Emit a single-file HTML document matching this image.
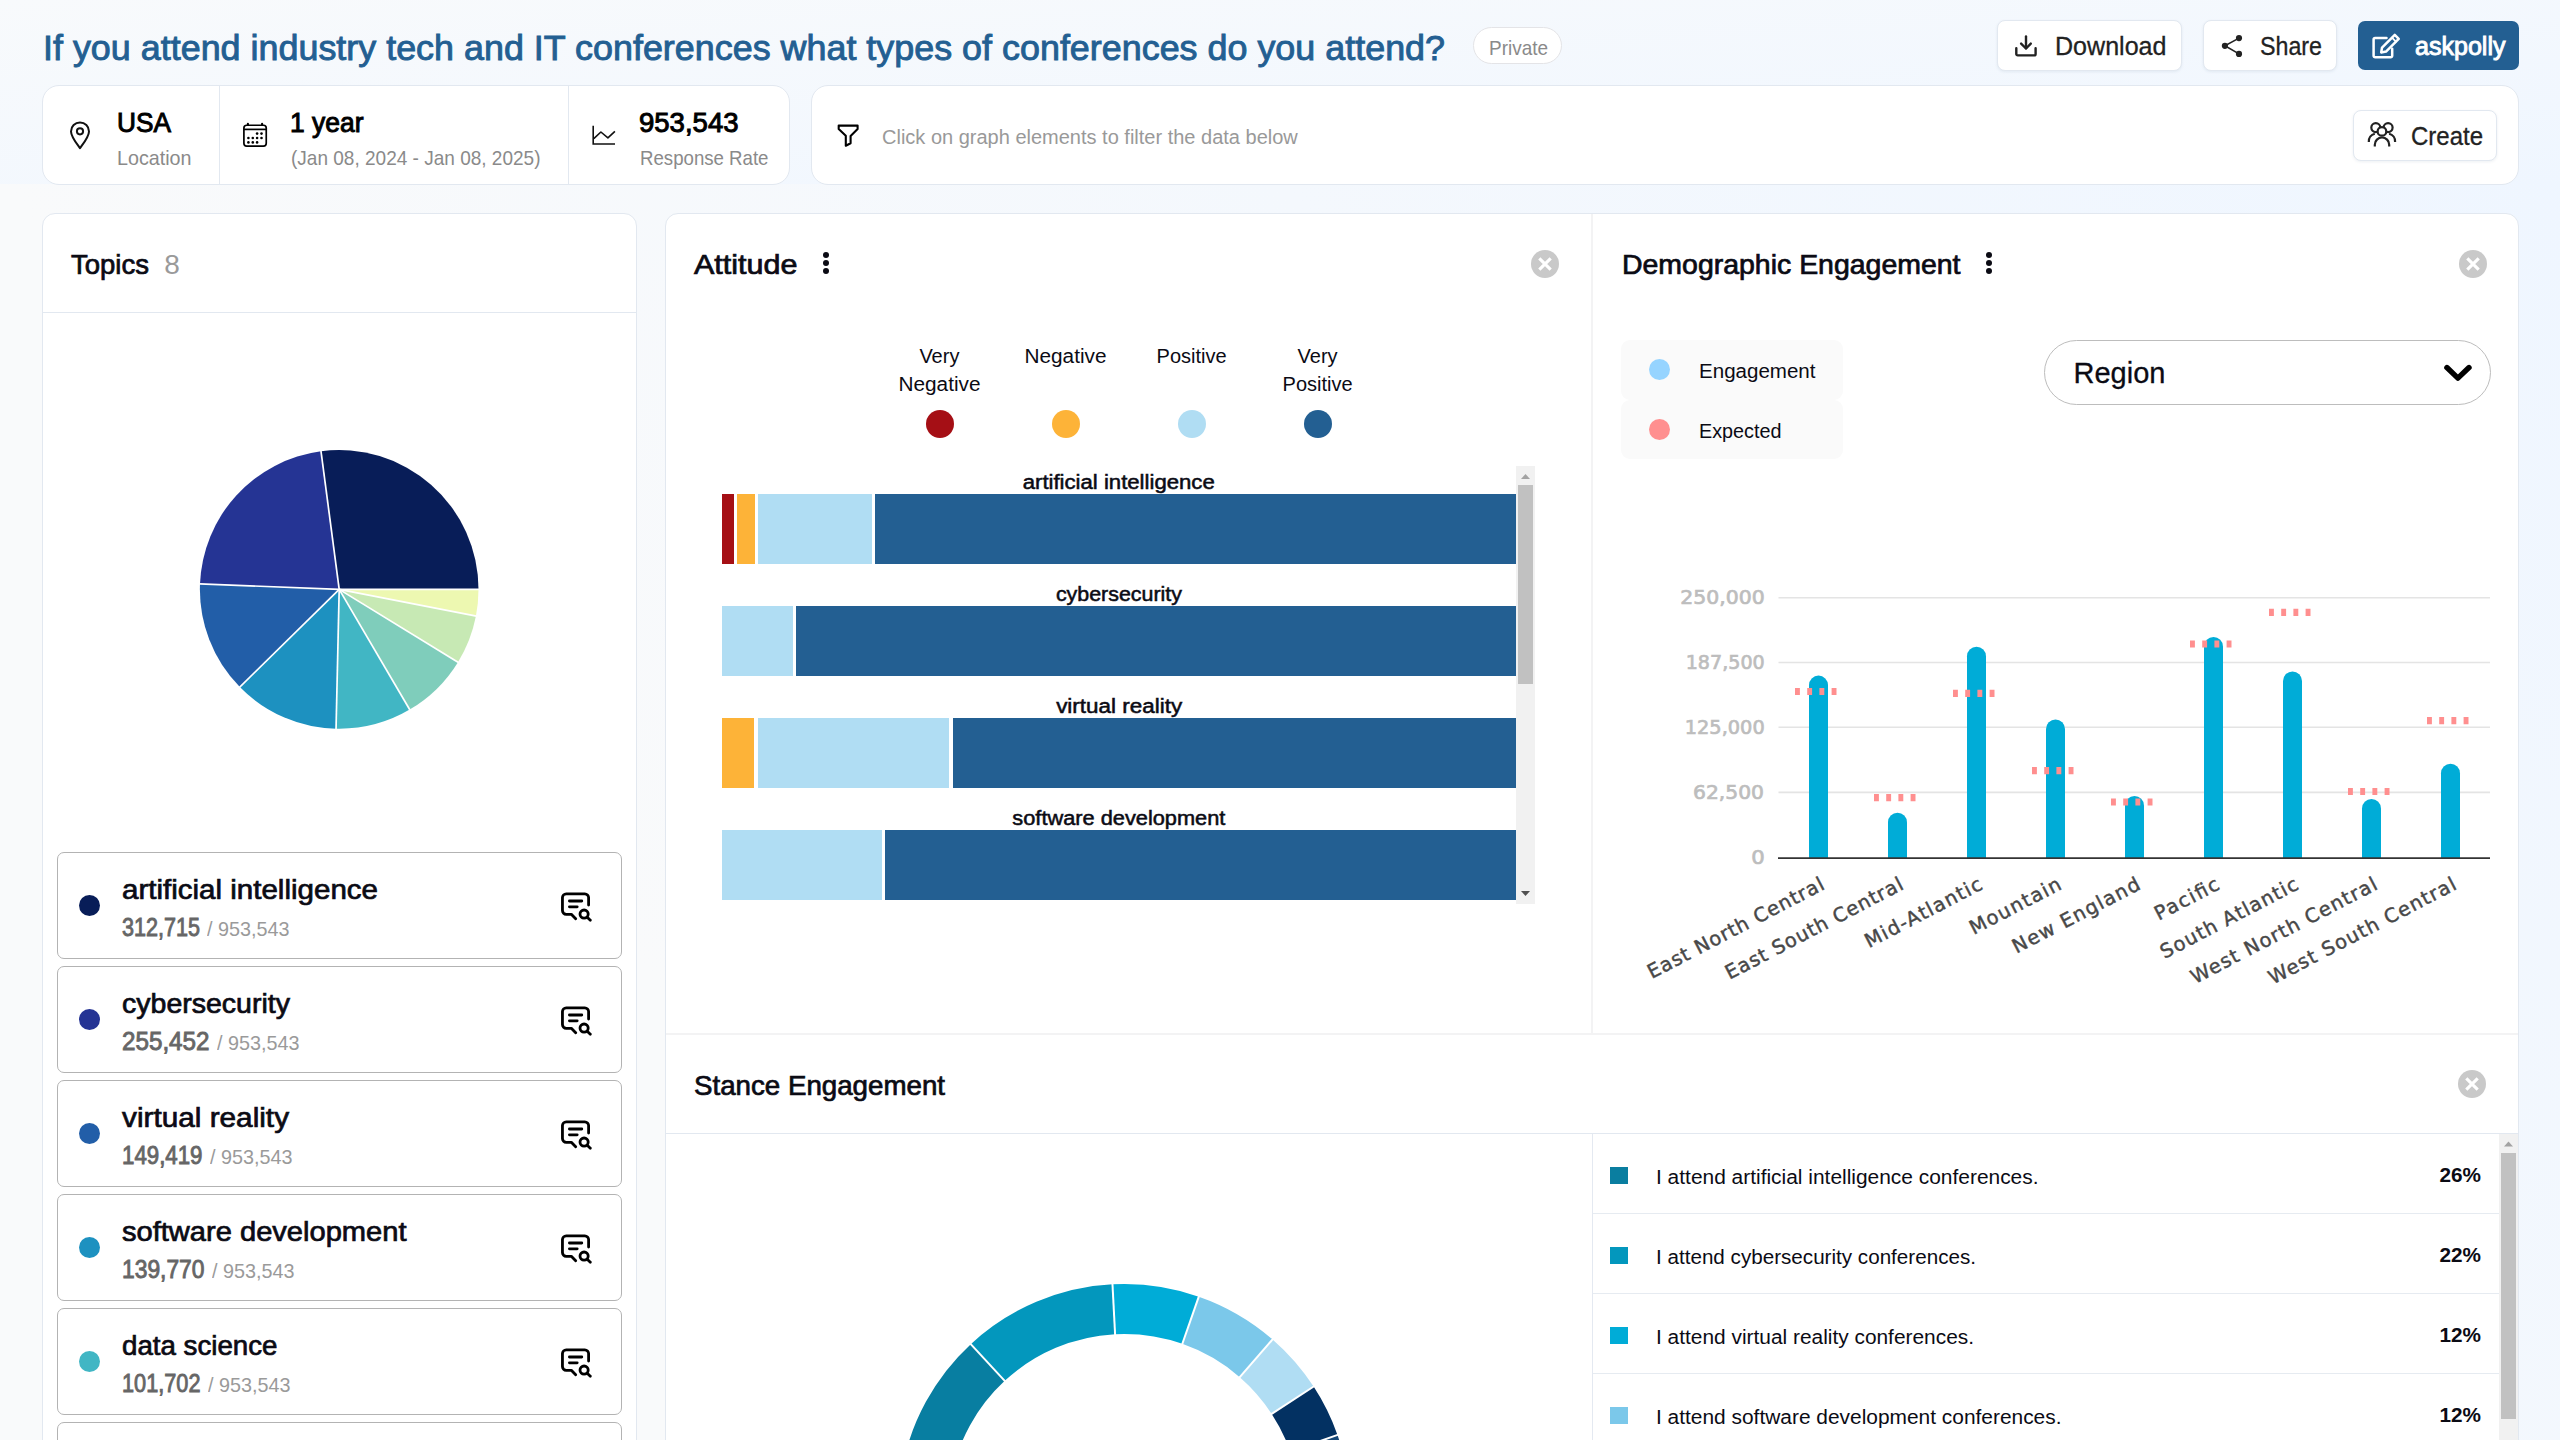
<!DOCTYPE html><html lang="en"><head><meta charset="utf-8"><title>askpolly – conference types dashboard</title><style>
*{box-sizing:border-box;margin:0;padding:0}
html,body{width:2560px;height:1440px;overflow:hidden}
body{font-family:"Liberation Sans",Arial,sans-serif;color:#000;background:#f4f8fc}
#app{position:relative;width:2560px;height:1440px;overflow:hidden;
 background:#f9fafb}
#bg1{position:absolute;left:0;top:0;width:2560px;height:184px;background:linear-gradient(to bottom right,#f8fafc,#eff6ff)}
#bg2{position:absolute;left:0;top:184px;width:2560px;height:3140px;background:linear-gradient(to top right,#f9fafb 0%,#f9fafb 50%,#eff6ff 100%)}
.abs{position:absolute}
.card{position:absolute;background:#fff;border:1px solid #e2e8f0}
.btn{position:absolute;background:#fff;border:1px solid #e2e8f0;border-radius:8px;box-shadow:0 1px 3px rgba(30,60,100,.08)}
svg{position:absolute;overflow:visible}
</style></head><body><div id="app"><div id="bg1"></div><div id="bg2"></div>
<header>
<span style="position:absolute;left:42.50px;top:30.00px;font-family:'Liberation Sans', Arial, sans-serif;font-size:35px;line-height:35px;font-weight:400;color:#235f92;white-space:pre;transform:scaleX(1.0255);transform-origin:0 0;-webkit-text-stroke:0.91px #235f92;">If you attend industry tech and IT conferences what types of conferences do you attend?</span>
<div class="abs" style="left:1473px;top:27px;width:89px;height:37px;border:1px solid #e4e4e7;border-radius:19px;background:#fff"></div>
<span style="position:absolute;left:1488.50px;top:37.00px;font-family:'Liberation Sans', Arial, sans-serif;font-size:21px;line-height:21px;font-weight:400;color:#8a8a8a;white-space:pre;transform:scaleX(0.9027);transform-origin:0 0;">Private</span>
<div class="btn" style="left:1997px;top:20px;width:185px;height:51px"></div>
<svg style="left:2014px;top:34px" width="24" height="24" viewBox="0 0 24 24" fill="none" stroke="#222" stroke-width="2.400" stroke-linecap="round" stroke-linejoin="round"><path d="M2.300 14.300V20a1.400 1.400 0 0 0 1.400 1.400H20.200a1.400 1.400 0 0 0 1.400-1.400V14.300"/><path d="M12 2.400V14.200"/><path d="M7.100 9.600 12 14.500l4.800-4.900"/></svg>
<span style="position:absolute;left:2054.50px;top:33.00px;font-family:'Liberation Sans', Arial, sans-serif;font-size:26px;line-height:26px;font-weight:400;color:#222;white-space:pre;transform:scaleX(0.9642);transform-origin:0 0;-webkit-text-stroke:0.300px #222;">Download</span>
<div class="btn" style="left:2203px;top:20px;width:133.5px;height:51px"></div>
<svg style="left:0;top:0" width="2560" height="100" viewBox="0 0 2560 100"><path d="M2239 38.100 2224.900 45.800 2239 53.900" stroke="#222" stroke-width="1.600" fill="none"/><circle cx="2239" cy="38.100" r="3.100" fill="#222"/><circle cx="2224.900" cy="45.800" r="3.100" fill="#222"/><circle cx="2239" cy="53.900" r="3.100" fill="#222"/></svg>
<span style="position:absolute;left:2260.00px;top:33.00px;font-family:'Liberation Sans', Arial, sans-serif;font-size:26px;line-height:26px;font-weight:400;color:#222;white-space:pre;transform:scaleX(0.8935);transform-origin:0 0;-webkit-text-stroke:0.300px #222;">Share</span>
<div class="abs" style="left:2358px;top:21px;width:161px;height:49px;background:#235f92;border-radius:7px"></div>
<svg style="left:0;top:0" width="2560" height="100" viewBox="0 0 2560 100" fill="none" stroke="#fff" stroke-width="2.500" stroke-linecap="round" stroke-linejoin="round"><path d="M2386.500 37.900H2375.100a1.500 1.500 0 0 0-1.500 1.500V55.700a1.500 1.500 0 0 0 1.500 1.500H2390.700a1.500 1.500 0 0 0 1.500-1.500V48.800"/><path d="M2381.200 52.400 2382.050 47.590 2394.780 34.860 2398.740 38.820 2386.010 51.550Z"/><path d="M2391.950 37.690 2395.910 41.650" stroke-width="1.800"/></svg>
<span style="position:absolute;left:2415.00px;top:33.00px;font-family:'Liberation Sans', Arial, sans-serif;font-size:26px;line-height:26px;font-weight:400;color:#fff;white-space:pre;transform:scaleX(0.9634);transform-origin:0 0;-webkit-text-stroke:0.94px #fff;">askpolly</span>
</header>
<section>
<div class="card" style="left:42px;top:85px;width:748px;height:100px;border-radius:17px"></div>
<div class="abs" style="left:219px;top:86px;width:1px;height:98px;background:#e2e8f0"></div>
<div class="abs" style="left:568px;top:86px;width:1px;height:98px;background:#e2e8f0"></div>
<svg style="left:68.700px;top:120.700px" width="22" height="29" viewBox="0 0 22 29" fill="none" stroke="#111" stroke-width="2"><path d="M11 27.2C8.2 23.2 2 15.6 2 10.4a9 9 0 0 1 18 0c0 5.200-6.200 12.800-9 16.800z" stroke-linejoin="round"/><circle cx="11" cy="10.300" r="3.100"/></svg>
<span style="position:absolute;left:116.50px;top:110.00px;font-family:'Liberation Sans', Arial, sans-serif;font-size:27px;line-height:27px;font-weight:400;color:#000;white-space:pre;transform:scaleX(0.9724);transform-origin:0 0;-webkit-text-stroke:0.97px #000;">USA</span>
<span style="position:absolute;left:116.50px;top:147.00px;font-family:'Liberation Sans', Arial, sans-serif;font-size:21px;line-height:21px;font-weight:400;color:#8a8a8a;white-space:pre;transform:scaleX(0.9382);transform-origin:0 0;">Location</span>
<svg style="left:0;top:0" width="400" height="200" viewBox="0 0 400 200" fill="none" stroke="#000" stroke-width="1.700"><rect x="243.900" y="125.250" width="22.350" height="20.800" rx="2.800"/><path d="M243.900 129.400H266.250"/><path d="M247.900 123.800V125M262.100 123.800V125" stroke-width="2.100" stroke-linecap="round"/><g fill="#000" stroke="none"><circle cx="257.1" cy="133.6" r="1.300"/><circle cx="261.5" cy="133.6" r="1.300"/><circle cx="248.4" cy="138.0" r="1.300"/><circle cx="252.8" cy="138.0" r="1.300"/><circle cx="257.1" cy="138.0" r="1.300"/><circle cx="261.5" cy="138.0" r="1.300"/><circle cx="248.4" cy="142.4" r="1.300"/><circle cx="252.8" cy="142.4" r="1.300"/><circle cx="257.1" cy="142.4" r="1.300"/></g></svg>
<span style="position:absolute;left:289.50px;top:110.00px;font-family:'Liberation Sans', Arial, sans-serif;font-size:27px;line-height:27px;font-weight:400;color:#000;white-space:pre;transform:scaleX(0.9794);transform-origin:0 0;-webkit-text-stroke:0.97px #000;">1 year</span>
<span style="position:absolute;left:290.50px;top:147.00px;font-family:'Liberation Sans', Arial, sans-serif;font-size:21px;line-height:21px;font-weight:400;color:#8a8a8a;white-space:pre;transform:scaleX(0.9055);transform-origin:0 0;">(Jan 08, 2024 - Jan 08, 2025)</span>
<svg style="left:592px;top:125px" width="24" height="21" viewBox="0 0 24 21" fill="none" stroke="#111" stroke-width="1.600"><path d="M1.200 .800V19H23"/><path d="M1.800 13.700 8.900 7l7 5.900 7-6.600" stroke-linejoin="round"/></svg>
<span style="position:absolute;left:639.00px;top:110.00px;font-family:'Liberation Sans', Arial, sans-serif;font-size:27px;line-height:27px;font-weight:400;color:#000;white-space:pre;transform:scaleX(1.0194);transform-origin:0 0;-webkit-text-stroke:0.97px #000;">953,543</span>
<span style="position:absolute;left:639.50px;top:147.00px;font-family:'Liberation Sans', Arial, sans-serif;font-size:21px;line-height:21px;font-weight:400;color:#8a8a8a;white-space:pre;transform:scaleX(0.8876);transform-origin:0 0;">Response Rate</span>
<div class="card" style="left:811px;top:85px;width:1708px;height:100px;border-radius:17px"></div>
<svg style="left:828px;top:116px" width="40" height="40" viewBox="0 0 40 40" fill="none" stroke="#000" stroke-width="2.100" stroke-linejoin="round"><path d="M10.700 9.600H29.600V13L22.600 20V27.200L17.800 29.700V19.700L10.700 13Z"/></svg>
<span style="position:absolute;left:882.00px;top:127.00px;font-family:'Liberation Sans', Arial, sans-serif;font-size:20px;line-height:20px;font-weight:400;color:#999;white-space:pre;">Click on graph elements to filter the data below</span>
<div class="btn" style="left:2353px;top:110px;width:144px;height:50.5px"></div>
<svg style="left:0;top:0" width="2560" height="200" viewBox="0 0 2560 200" fill="none" stroke="#222" stroke-width="2.200" stroke-linecap="butt"><circle cx="2375.800" cy="127.600" r="4.500"/><circle cx="2388.100" cy="127.600" r="4.500"/><circle cx="2381.950" cy="131.400" r="4.300" fill="#fff"/><path d="M2374.800 146.500v-1.800a7.200 7.200 0 0 1 14.400 0v1.800"/><path d="M2368.800 142a8 8 0 0 1 6-8.300"/><path d="M2395.100 142a8 8 0 0 0-6-8.300"/></svg>
<span style="position:absolute;left:2410.50px;top:123.00px;font-family:'Liberation Sans', Arial, sans-serif;font-size:26px;line-height:26px;font-weight:400;color:#222;white-space:pre;transform:scaleX(0.9225);transform-origin:0 0;-webkit-text-stroke:0.300px #222;">Create</span>
</section>
<aside>
<div class="card" style="left:42px;top:213px;width:595px;height:1300px;border-radius:13px"></div>
<div class="abs" style="left:43px;top:311.500px;width:593px;height:1px;background:#e2e8f0"></div>
<span style="position:absolute;left:71.00px;top:251.00px;font-family:'Liberation Sans', Arial, sans-serif;font-size:28px;line-height:28px;font-weight:400;color:#0b0b14;white-space:pre;transform:scaleX(0.9827);transform-origin:0 0;-webkit-text-stroke:0.73px #0b0b14;">Topics</span>
<span style="position:absolute;left:164.30px;top:251.00px;font-family:'Liberation Sans', Arial, sans-serif;font-size:28px;line-height:28px;font-weight:400;color:#9a9a9a;white-space:pre;">8</span>
<svg style="left:0;top:0" width="700" height="800" viewBox="0 0 700 800"><path d="M339.2 589.4L478.50 589.40A139.3 139.3 0 0 0 321.02 451.29Z" fill="#081d58"/><path d="M339.2 589.4L321.02 451.29A139.3 139.3 0 0 0 200.01 583.81Z" fill="#253494"/><path d="M339.2 589.4L200.01 583.81A139.3 139.3 0 0 0 239.84 687.04Z" fill="#225ea8"/><path d="M339.2 589.4L239.84 687.04A139.3 139.3 0 0 0 336.04 728.66Z" fill="#1d91c0"/><path d="M339.2 589.4L336.04 728.66A139.3 139.3 0 0 0 409.69 709.55Z" fill="#41b6c4"/><path d="M339.2 589.4L409.69 709.55A139.3 139.3 0 0 0 457.97 662.18Z" fill="#7fcdbb"/><path d="M339.2 589.4L457.97 662.18A139.3 139.3 0 0 0 475.94 615.98Z" fill="#c7e9b4"/><path d="M339.2 589.4L475.94 615.98A139.3 139.3 0 0 0 478.50 589.40Z" fill="#edf8b1"/><path d="M339.2 589.4L479.00 589.40" stroke="#fff" stroke-width="1.700" stroke-linecap="butt"/><path d="M339.2 589.4L320.95 450.80" stroke="#fff" stroke-width="1.700" stroke-linecap="butt"/><path d="M339.2 589.4L199.51 583.79" stroke="#fff" stroke-width="1.700" stroke-linecap="butt"/><path d="M339.2 589.4L239.49 687.39" stroke="#fff" stroke-width="1.700" stroke-linecap="butt"/><path d="M339.2 589.4L336.03 729.16" stroke="#fff" stroke-width="1.700" stroke-linecap="butt"/><path d="M339.2 589.4L409.94 709.98" stroke="#fff" stroke-width="1.700" stroke-linecap="butt"/><path d="M339.2 589.4L458.40 662.45" stroke="#fff" stroke-width="1.700" stroke-linecap="butt"/><path d="M339.2 589.4L476.43 616.08" stroke="#fff" stroke-width="1.700" stroke-linecap="butt"/></svg>
<div class="abs" style="left:57px;top:852px;width:565px;height:107px;border:1px solid #b3b3b3;border-radius:7px;background:#fff"></div>
<div class="abs" style="left:79px;top:894.5px;width:21px;height:21px;border-radius:50%;background:#081d58"></div>
<span style="position:absolute;left:121.50px;top:877.00px;font-family:'Liberation Sans', Arial, sans-serif;font-size:27px;line-height:27px;font-weight:400;color:#0b0b14;white-space:pre;transform:scaleX(1.0934);transform-origin:0 0;-webkit-text-stroke:0.70px #0b0b14;">artificial intelligence</span>
<span style="position:absolute;left:121.80px;top:915.00px;font-family:'Liberation Sans', Arial, sans-serif;font-size:25px;line-height:25px;font-weight:400;color:#666;white-space:pre;transform:scaleX(0.8631);transform-origin:0 0;-webkit-text-stroke:0.90px #666;">312,715</span>
<span style="position:absolute;left:207.10px;top:918.00px;font-family:'Liberation Sans', Arial, sans-serif;font-size:21px;line-height:21px;font-weight:400;color:#9a9a9a;white-space:pre;transform:scaleX(0.9418);transform-origin:0 0;">/ 953,543</span>
<svg style="left:0;top:0px" width="700" height="1000" viewBox="0 0 700 1000" fill="none" stroke="#000" stroke-width="2.800" stroke-linecap="round" stroke-linejoin="round"><path d="M588.600 905V897.600a3.800 3.800 0 0 0-3.800-3.800H566.250a3.800 3.800 0 0 0-3.800 3.800v12.900a3.800 3.800 0 0 0 3.800 3.800h5.050l4.400 4.500"/><path d="M569.400 901h12.400M569.400 906.800h7.800"/><circle cx="584.100" cy="914.100" r="4.100"/><path d="M587.500 917.500l2.800 2.800"/></svg>
<div class="abs" style="left:57px;top:966px;width:565px;height:107px;border:1px solid #b3b3b3;border-radius:7px;background:#fff"></div>
<div class="abs" style="left:79px;top:1008.5px;width:21px;height:21px;border-radius:50%;background:#253494"></div>
<span style="position:absolute;left:121.50px;top:991.00px;font-family:'Liberation Sans', Arial, sans-serif;font-size:27px;line-height:27px;font-weight:400;color:#0b0b14;white-space:pre;transform:scaleX(1.0563);transform-origin:0 0;-webkit-text-stroke:0.70px #0b0b14;">cybersecurity</span>
<span style="position:absolute;left:121.80px;top:1029.00px;font-family:'Liberation Sans', Arial, sans-serif;font-size:25px;line-height:25px;font-weight:400;color:#666;white-space:pre;transform:scaleX(0.9682);transform-origin:0 0;-webkit-text-stroke:0.90px #666;">255,452</span>
<span style="position:absolute;left:216.60px;top:1032.00px;font-family:'Liberation Sans', Arial, sans-serif;font-size:21px;line-height:21px;font-weight:400;color:#9a9a9a;white-space:pre;transform:scaleX(0.9418);transform-origin:0 0;">/ 953,543</span>
<svg style="left:0;top:114px" width="700" height="1000" viewBox="0 0 700 1000" fill="none" stroke="#000" stroke-width="2.800" stroke-linecap="round" stroke-linejoin="round"><path d="M588.600 905V897.600a3.800 3.800 0 0 0-3.800-3.800H566.250a3.800 3.800 0 0 0-3.800 3.800v12.900a3.800 3.800 0 0 0 3.800 3.800h5.050l4.400 4.500"/><path d="M569.400 901h12.400M569.400 906.800h7.800"/><circle cx="584.100" cy="914.100" r="4.100"/><path d="M587.500 917.500l2.800 2.800"/></svg>
<div class="abs" style="left:57px;top:1080px;width:565px;height:107px;border:1px solid #b3b3b3;border-radius:7px;background:#fff"></div>
<div class="abs" style="left:79px;top:1122.5px;width:21px;height:21px;border-radius:50%;background:#225ea8"></div>
<span style="position:absolute;left:121.50px;top:1105.00px;font-family:'Liberation Sans', Arial, sans-serif;font-size:27px;line-height:27px;font-weight:400;color:#0b0b14;white-space:pre;transform:scaleX(1.1020);transform-origin:0 0;-webkit-text-stroke:0.70px #0b0b14;">virtual reality</span>
<span style="position:absolute;left:121.80px;top:1143.00px;font-family:'Liberation Sans', Arial, sans-serif;font-size:25px;line-height:25px;font-weight:400;color:#666;white-space:pre;transform:scaleX(0.8907);transform-origin:0 0;-webkit-text-stroke:0.90px #666;">149,419</span>
<span style="position:absolute;left:209.60px;top:1146.00px;font-family:'Liberation Sans', Arial, sans-serif;font-size:21px;line-height:21px;font-weight:400;color:#9a9a9a;white-space:pre;transform:scaleX(0.9418);transform-origin:0 0;">/ 953,543</span>
<svg style="left:0;top:228px" width="700" height="1000" viewBox="0 0 700 1000" fill="none" stroke="#000" stroke-width="2.800" stroke-linecap="round" stroke-linejoin="round"><path d="M588.600 905V897.600a3.800 3.800 0 0 0-3.800-3.800H566.250a3.800 3.800 0 0 0-3.800 3.800v12.900a3.800 3.800 0 0 0 3.800 3.800h5.050l4.400 4.500"/><path d="M569.400 901h12.400M569.400 906.800h7.800"/><circle cx="584.100" cy="914.100" r="4.100"/><path d="M587.500 917.500l2.800 2.800"/></svg>
<div class="abs" style="left:57px;top:1194px;width:565px;height:107px;border:1px solid #b3b3b3;border-radius:7px;background:#fff"></div>
<div class="abs" style="left:79px;top:1236.5px;width:21px;height:21px;border-radius:50%;background:#1d91c0"></div>
<span style="position:absolute;left:121.50px;top:1219.00px;font-family:'Liberation Sans', Arial, sans-serif;font-size:27px;line-height:27px;font-weight:400;color:#0b0b14;white-space:pre;transform:scaleX(1.0770);transform-origin:0 0;-webkit-text-stroke:0.70px #0b0b14;">software development</span>
<span style="position:absolute;left:121.80px;top:1257.00px;font-family:'Liberation Sans', Arial, sans-serif;font-size:25px;line-height:25px;font-weight:400;color:#666;white-space:pre;transform:scaleX(0.9129);transform-origin:0 0;-webkit-text-stroke:0.90px #666;">139,770</span>
<span style="position:absolute;left:211.60px;top:1260.00px;font-family:'Liberation Sans', Arial, sans-serif;font-size:21px;line-height:21px;font-weight:400;color:#9a9a9a;white-space:pre;transform:scaleX(0.9418);transform-origin:0 0;">/ 953,543</span>
<svg style="left:0;top:342px" width="700" height="1000" viewBox="0 0 700 1000" fill="none" stroke="#000" stroke-width="2.800" stroke-linecap="round" stroke-linejoin="round"><path d="M588.600 905V897.600a3.800 3.800 0 0 0-3.800-3.800H566.250a3.800 3.800 0 0 0-3.800 3.800v12.900a3.800 3.800 0 0 0 3.800 3.800h5.050l4.400 4.500"/><path d="M569.400 901h12.400M569.400 906.800h7.800"/><circle cx="584.100" cy="914.100" r="4.100"/><path d="M587.500 917.500l2.800 2.800"/></svg>
<div class="abs" style="left:57px;top:1308px;width:565px;height:107px;border:1px solid #b3b3b3;border-radius:7px;background:#fff"></div>
<div class="abs" style="left:79px;top:1350.5px;width:21px;height:21px;border-radius:50%;background:#41b6c4"></div>
<span style="position:absolute;left:121.50px;top:1333.00px;font-family:'Liberation Sans', Arial, sans-serif;font-size:27px;line-height:27px;font-weight:400;color:#0b0b14;white-space:pre;transform:scaleX(1.0257);transform-origin:0 0;-webkit-text-stroke:0.70px #0b0b14;">data science</span>
<span style="position:absolute;left:121.80px;top:1371.00px;font-family:'Liberation Sans', Arial, sans-serif;font-size:25px;line-height:25px;font-weight:400;color:#666;white-space:pre;transform:scaleX(0.8686);transform-origin:0 0;-webkit-text-stroke:0.90px #666;">101,702</span>
<span style="position:absolute;left:207.60px;top:1374.00px;font-family:'Liberation Sans', Arial, sans-serif;font-size:21px;line-height:21px;font-weight:400;color:#9a9a9a;white-space:pre;transform:scaleX(0.9418);transform-origin:0 0;">/ 953,543</span>
<svg style="left:0;top:456px" width="700" height="1000" viewBox="0 0 700 1000" fill="none" stroke="#000" stroke-width="2.800" stroke-linecap="round" stroke-linejoin="round"><path d="M588.600 905V897.600a3.800 3.800 0 0 0-3.800-3.800H566.250a3.800 3.800 0 0 0-3.800 3.800v12.900a3.800 3.800 0 0 0 3.800 3.800h5.050l4.400 4.500"/><path d="M569.400 901h12.400M569.400 906.800h7.800"/><circle cx="584.100" cy="914.100" r="4.100"/><path d="M587.500 917.500l2.800 2.800"/></svg>
<div class="abs" style="left:57px;top:1422px;width:565px;height:107px;border:1px solid #b3b3b3;border-radius:7px;background:#fff"></div>
</aside>
<main>
<div class="card" style="left:665px;top:213px;width:1854px;height:1300px;border-radius:13px"></div>
<div class="abs" style="left:1591px;top:214px;width:2px;height:820px;background:#f3f3f4"></div>
<div class="abs" style="left:666px;top:1033px;width:1852px;height:2px;background:#f3f3f4"></div>
<div class="abs" style="left:666px;top:1132.500px;width:1852px;height:1.500px;background:#e2e8f0"></div>
<div class="abs" style="left:1591.500px;top:1134px;width:1.500px;height:320px;background:#e4e9f1"></div>
<section>
<span style="position:absolute;left:694.00px;top:251.00px;font-family:'Liberation Sans', Arial, sans-serif;font-size:28px;line-height:28px;font-weight:400;color:#0b0b14;white-space:pre;transform:scaleX(1.0900);transform-origin:0 0;-webkit-text-stroke:0.73px #0b0b14;">Attitude</span>
<div class="abs" style="left:823px;top:251.6px;width:6px;height:6px;border-radius:50%;background:#0b0b14"></div><div class="abs" style="left:823px;top:260px;width:6px;height:6px;border-radius:50%;background:#0b0b14"></div><div class="abs" style="left:823px;top:268.4px;width:6px;height:6px;border-radius:50%;background:#0b0b14"></div>
<svg style="left:1531.3px;top:249.5px" width="28" height="28" viewBox="0 0 28 28"><circle cx="14" cy="14" r="14" fill="#c9c9c9"/><path d="M8.300 8.300 19.700 19.700M19.700 8.300 8.300 19.700" stroke="#fff" stroke-width="3.100" stroke-linecap="butt"/></svg>
<span style="position:absolute;left:919.38px;top:346.00px;font-family:'Liberation Sans', Arial, sans-serif;font-size:20px;line-height:20px;font-weight:400;color:#0b0b14;white-space:pre;">Very</span>
<span style="position:absolute;left:899.93px;top:374.00px;font-family:'Liberation Sans', Arial, sans-serif;font-size:20px;line-height:20px;font-weight:400;color:#0b0b14;white-space:pre;transform:scaleX(1.0388);transform-origin:50% 0;">Negative</span>
<div class="abs" style="left:926.0px;top:410px;width:28px;height:28px;border-radius:50%;background:#a50f15"></div>
<span style="position:absolute;left:1025.93px;top:346.00px;font-family:'Liberation Sans', Arial, sans-serif;font-size:20px;line-height:20px;font-weight:400;color:#0b0b14;white-space:pre;transform:scaleX(1.0388);transform-origin:50% 0;">Negative</span>
<div class="abs" style="left:1052.0px;top:410px;width:28px;height:28px;border-radius:50%;background:#fdb338"></div>
<span style="position:absolute;left:1156.58px;top:346.00px;font-family:'Liberation Sans', Arial, sans-serif;font-size:20px;line-height:20px;font-weight:400;color:#0b0b14;white-space:pre;">Positive</span>
<div class="abs" style="left:1178.1999999999998px;top:410px;width:28px;height:28px;border-radius:50%;background:#b0ddf3"></div>
<span style="position:absolute;left:1297.58px;top:346.00px;font-family:'Liberation Sans', Arial, sans-serif;font-size:20px;line-height:20px;font-weight:400;color:#0b0b14;white-space:pre;">Very</span>
<span style="position:absolute;left:1282.58px;top:374.00px;font-family:'Liberation Sans', Arial, sans-serif;font-size:20px;line-height:20px;font-weight:400;color:#0b0b14;white-space:pre;">Positive</span>
<div class="abs" style="left:1304.1999999999998px;top:410px;width:28px;height:28px;border-radius:50%;background:#235f92"></div>
<span style="position:absolute;left:1032.09px;top:472.00px;font-family:'Liberation Sans', Arial, sans-serif;font-size:20px;line-height:20px;font-weight:400;color:#0b0b14;white-space:pre;transform:scaleX(1.1071);transform-origin:50% 0;-webkit-text-stroke:0.52px #0b0b14;">artificial intelligence</span>
<div class="abs" style="left:721.7px;top:493.7px;width:12.5px;height:70px;background:#a50f15"></div>
<div class="abs" style="left:736.7px;top:493.7px;width:18.4px;height:70px;background:#fdb338"></div>
<div class="abs" style="left:758px;top:493.7px;width:114.2px;height:70px;background:#b0ddf3"></div>
<div class="abs" style="left:874.8px;top:493.7px;width:641.2px;height:70px;background:#235f92"></div>
<span style="position:absolute;left:1059.89px;top:584.00px;font-family:'Liberation Sans', Arial, sans-serif;font-size:20px;line-height:20px;font-weight:400;color:#0b0b14;white-space:pre;transform:scaleX(1.0695);transform-origin:50% 0;-webkit-text-stroke:0.52px #0b0b14;">cybersecurity</span>
<div class="abs" style="left:721.7px;top:605.8px;width:70.9px;height:70px;background:#b0ddf3"></div>
<div class="abs" style="left:795.9px;top:605.8px;width:720.1px;height:70px;background:#235f92"></div>
<span style="position:absolute;left:1062.67px;top:696.00px;font-family:'Liberation Sans', Arial, sans-serif;font-size:20px;line-height:20px;font-weight:400;color:#0b0b14;white-space:pre;transform:scaleX(1.1223);transform-origin:50% 0;-webkit-text-stroke:0.52px #0b0b14;">virtual reality</span>
<div class="abs" style="left:721.7px;top:717.8px;width:32.3px;height:70px;background:#fdb338"></div>
<div class="abs" style="left:758px;top:717.8px;width:191.0px;height:70px;background:#b0ddf3"></div>
<div class="abs" style="left:953px;top:717.8px;width:563.0px;height:70px;background:#235f92"></div>
<span style="position:absolute;left:1020.96px;top:808.00px;font-family:'Liberation Sans', Arial, sans-serif;font-size:20px;line-height:20px;font-weight:400;color:#0b0b14;white-space:pre;transform:scaleX(1.0886);transform-origin:50% 0;-webkit-text-stroke:0.52px #0b0b14;">software development</span>
<div class="abs" style="left:721.7px;top:829.9px;width:160.1px;height:70px;background:#b0ddf3"></div>
<div class="abs" style="left:885px;top:829.9px;width:631.0px;height:70px;background:#235f92"></div>
<div class="abs" style="left:1516px;top:466px;width:19px;height:438px;background:#f1f1f1"></div>
<div class="abs" style="left:1518px;top:484.500px;width:15px;height:199px;background:#c1c1c1"></div>
<svg style="left:1516px;top:467px" width="19" height="437" viewBox="0 0 19 437"><path d="M5 12h9l-4.500-5z" fill="#a3a3a3"/><path d="M5 424h9l-4.500 5z" fill="#505050"/></svg>
</section>
<section>
<span style="position:absolute;left:1622.00px;top:251.00px;font-family:'Liberation Sans', Arial, sans-serif;font-size:28px;line-height:28px;font-weight:400;color:#0b0b14;white-space:pre;transform:scaleX(1.0162);transform-origin:0 0;-webkit-text-stroke:0.73px #0b0b14;">Demographic Engagement</span>
<div class="abs" style="left:1985.6px;top:251.6px;width:6px;height:6px;border-radius:50%;background:#0b0b14"></div><div class="abs" style="left:1985.6px;top:260px;width:6px;height:6px;border-radius:50%;background:#0b0b14"></div><div class="abs" style="left:1985.6px;top:268.4px;width:6px;height:6px;border-radius:50%;background:#0b0b14"></div>
<svg style="left:2458.5px;top:249.5px" width="28" height="28" viewBox="0 0 28 28"><circle cx="14" cy="14" r="14" fill="#c9c9c9"/><path d="M8.300 8.300 19.700 19.700M19.700 8.300 8.300 19.700" stroke="#fff" stroke-width="3.100" stroke-linecap="butt"/></svg>
<div class="abs" style="left:1621px;top:340px;width:222px;height:60px;border-radius:9px;background:#fafafa"></div>
<div class="abs" style="left:1621px;top:400px;width:222px;height:58.500px;border-radius:9px;background:#fafafa"></div>
<div class="abs" style="left:1648.800px;top:358.900px;width:21px;height:21px;border-radius:50%;background:#96d4ff"></div>
<div class="abs" style="left:1648.800px;top:419.100px;width:21px;height:21px;border-radius:50%;background:#ff8f8f"></div>
<span style="position:absolute;left:1698.50px;top:361.00px;font-family:'Liberation Sans', Arial, sans-serif;font-size:20px;line-height:20px;font-weight:400;color:#0b0b14;white-space:pre;transform:scaleX(1.0271);transform-origin:0 0;">Engagement</span>
<span style="position:absolute;left:1698.50px;top:421.00px;font-family:'Liberation Sans', Arial, sans-serif;font-size:20px;line-height:20px;font-weight:400;color:#0b0b14;white-space:pre;transform:scaleX(0.9893);transform-origin:0 0;">Expected</span>
<div class="abs" style="left:2044px;top:340px;width:446.500px;height:65px;border:1px solid #bdbdbd;border-radius:33px;background:#fff"></div>
<span style="position:absolute;left:2073.50px;top:359.00px;font-family:'Liberation Sans', Arial, sans-serif;font-size:29px;line-height:29px;font-weight:400;color:#0b0b14;white-space:pre;-webkit-text-stroke:0.300px #0b0b14;">Region</span>
<svg style="left:2442px;top:362px" width="34" height="22" viewBox="0 0 34 22" fill="none" stroke="#000" stroke-width="5.400" stroke-linecap="round" stroke-linejoin="round"><path d="M4.900 5.500 15.900 16.100 27 5.500"/></svg>
<svg style="left:0;top:0" width="2560" height="1100" viewBox="0 0 2560 1100"><path d="M1778.500 597.8H2490" stroke="#e4e4e4" stroke-width="1.600"/><path d="M1778.500 662.5H2490" stroke="#e4e4e4" stroke-width="1.600"/><path d="M1778.500 727.3H2490" stroke="#e4e4e4" stroke-width="1.600"/><path d="M1778.500 792.4H2490" stroke="#e4e4e4" stroke-width="1.600"/><path d="M1809.0 858V685.1a9.500 9.500 0 0 1 19 0V858z" fill="#00acd7"/><path d="M1888.0 858V822.2a9.500 9.500 0 0 1 19 0V858z" fill="#00acd7"/><path d="M1967.0 858V656.3a9.500 9.500 0 0 1 19 0V858z" fill="#00acd7"/><path d="M2046.0 858V729.0a9.500 9.500 0 0 1 19 0V858z" fill="#00acd7"/><path d="M2125.0 858V805.5a9.500 9.500 0 0 1 19 0V858z" fill="#00acd7"/><path d="M2204.0 858V646.4a9.500 9.500 0 0 1 19 0V858z" fill="#00acd7"/><path d="M2283.0 858V680.9a9.500 9.500 0 0 1 19 0V858z" fill="#00acd7"/><path d="M2362.0 858V808.5a9.500 9.500 0 0 1 19 0V858z" fill="#00acd7"/><path d="M2441.0 858V773.3a9.500 9.500 0 0 1 19 0V858z" fill="#00acd7"/><path d="M1795.0 691.5H1837.5" stroke="#ff8f8f" stroke-width="7.200" stroke-dasharray="4.900 7.300"/><path d="M1874.0 797.6H1916.5" stroke="#ff8f8f" stroke-width="7.200" stroke-dasharray="4.900 7.300"/><path d="M1953.0 693.4H1995.5" stroke="#ff8f8f" stroke-width="7.200" stroke-dasharray="4.900 7.300"/><path d="M2032.0 770.7H2074.5" stroke="#ff8f8f" stroke-width="7.200" stroke-dasharray="4.900 7.300"/><path d="M2111.0 802H2153.5" stroke="#ff8f8f" stroke-width="7.200" stroke-dasharray="4.900 7.300"/><path d="M2190.0 644H2232.5" stroke="#ff8f8f" stroke-width="7.200" stroke-dasharray="4.900 7.300"/><path d="M2269.0 612.3H2311.5" stroke="#ff8f8f" stroke-width="7.200" stroke-dasharray="4.900 7.300"/><path d="M2348.0 791.5H2390.5" stroke="#ff8f8f" stroke-width="7.200" stroke-dasharray="4.900 7.300"/><path d="M2427.0 720.7H2469.5" stroke="#ff8f8f" stroke-width="7.200" stroke-dasharray="4.900 7.300"/><path d="M1778 858.200H2490" stroke="#333" stroke-width="1.800"/></svg>
<span style="position:absolute;left:1681.58px;top:587.00px;font-family:'DejaVu Sans', 'Liberation Sans', sans-serif;font-size:20px;line-height:20px;font-weight:400;color:#bdbdbd;white-space:pre;transform:scaleX(1.0215);transform-origin:100% 0;-webkit-text-stroke:0.700px #bdbdbd;">250,000</span>
<span style="position:absolute;left:1681.58px;top:652.00px;font-family:'DejaVu Sans', 'Liberation Sans', sans-serif;font-size:20px;line-height:20px;font-weight:400;color:#bdbdbd;white-space:pre;transform:scaleX(0.9550);transform-origin:100% 0;-webkit-text-stroke:0.700px #bdbdbd;">187,500</span>
<span style="position:absolute;left:1681.58px;top:717.00px;font-family:'DejaVu Sans', 'Liberation Sans', sans-serif;font-size:20px;line-height:20px;font-weight:400;color:#bdbdbd;white-space:pre;transform:scaleX(0.9671);transform-origin:100% 0;-webkit-text-stroke:0.700px #bdbdbd;">125,000</span>
<span style="position:absolute;left:1694.32px;top:782.00px;font-family:'DejaVu Sans', 'Liberation Sans', sans-serif;font-size:20px;line-height:20px;font-weight:400;color:#bdbdbd;white-space:pre;transform:scaleX(1.0145);transform-origin:100% 0;-webkit-text-stroke:0.700px #bdbdbd;">62,500</span>
<span style="position:absolute;left:1751.57px;top:847.00px;font-family:'DejaVu Sans', 'Liberation Sans', sans-serif;font-size:20px;line-height:20px;font-weight:400;color:#bdbdbd;white-space:pre;transform:scaleX(1.0601);transform-origin:100% 0;-webkit-text-stroke:0.700px #bdbdbd;">0</span>
<svg style="left:0;top:0" width="2560" height="1100" viewBox="0 0 2560 1100" font-family="DejaVu Sans, sans-serif" font-size="19.500" fill="#484848" stroke="#484848" stroke-width="0.450"><text x="1825.7" y="888.6" text-anchor="end" textLength="196" lengthAdjust="spacing" transform="rotate(-27.500 1825.7 888.6)">East North Central</text><text x="1904.7" y="888.6" text-anchor="end" textLength="197.5" lengthAdjust="spacing" transform="rotate(-27.500 1904.7 888.6)">East South Central</text><text x="1983.7" y="888.6" text-anchor="end" textLength="129.3" lengthAdjust="spacing" transform="rotate(-27.500 1983.7 888.6)">Mid-Atlantic</text><text x="2062.7" y="888.6" text-anchor="end" textLength="100.4" lengthAdjust="spacing" transform="rotate(-27.500 2062.7 888.6)">Mountain</text><text x="2141.7" y="888.6" text-anchor="end" textLength="141" lengthAdjust="spacing" transform="rotate(-27.500 2141.7 888.6)">New England</text><text x="2220.7" y="888.6" text-anchor="end" textLength="69.8" lengthAdjust="spacing" transform="rotate(-27.500 2220.7 888.6)">Pacific</text><text x="2299.7" y="888.6" text-anchor="end" textLength="152.3" lengthAdjust="spacing" transform="rotate(-27.500 2299.7 888.6)">South Atlantic</text><text x="2378.7" y="888.6" text-anchor="end" textLength="207" lengthAdjust="spacing" transform="rotate(-27.500 2378.7 888.6)">West North Central</text><text x="2457.7" y="888.6" text-anchor="end" textLength="208.5" lengthAdjust="spacing" transform="rotate(-27.500 2457.7 888.6)">West South Central</text></svg>
</section>
<section>
<span style="position:absolute;left:694.00px;top:1072.00px;font-family:'Liberation Sans', Arial, sans-serif;font-size:28px;line-height:28px;font-weight:400;color:#0b0b14;white-space:pre;transform:scaleX(0.9892);transform-origin:0 0;-webkit-text-stroke:0.73px #0b0b14;">Stance Engagement</span>
<svg style="left:2458.4px;top:1069.6px" width="28" height="28" viewBox="0 0 28 28"><circle cx="14" cy="14" r="14" fill="#c9c9c9"/><path d="M8.300 8.300 19.700 19.700M19.700 8.300 8.300 19.700" stroke="#fff" stroke-width="3.100" stroke-linecap="butt"/></svg>
<svg style="left:0;top:0" width="2560" height="1440" viewBox="0 0 2560 1440"><path d="M901.73 1470.76A226 226 0 0 1 970.75 1344.18L1004.72 1380.86A176 176 0 0 0 950.97 1479.44Z" fill="#087ea1"/><path d="M970.75 1344.18A226 226 0 0 1 1112.47 1284.31L1115.09 1334.24A176 176 0 0 0 1004.72 1380.86Z" fill="#0397bd"/><path d="M1112.47 1284.31A226 226 0 0 1 1198.81 1296.64L1182.33 1343.84A176 176 0 0 0 1115.09 1334.24Z" fill="#00acd7"/><path d="M1198.81 1296.64A226 226 0 0 1 1272.57 1339.44L1239.77 1377.17A176 176 0 0 0 1182.33 1343.84Z" fill="#7bc8ea"/><path d="M1272.57 1339.44A226 226 0 0 1 1313.62 1386.58L1271.74 1413.89A176 176 0 0 0 1239.77 1377.17Z" fill="#b0ddf3"/><path d="M1313.62 1386.58A226 226 0 0 1 1337.47 1434.93L1290.31 1451.54A176 176 0 0 0 1271.74 1413.89Z" fill="#033162"/><path d="M1337.47 1434.93A226 226 0 0 1 1346.87 1470.76L1297.63 1479.44A176 176 0 0 0 1290.31 1451.54Z" fill="#164878"/><path d="M970.07 1343.44L1005.40 1381.60" stroke="#fff" stroke-width="2"/><path d="M1112.42 1283.31L1115.14 1335.24" stroke="#fff" stroke-width="2"/><path d="M1199.14 1295.69L1182.00 1344.78" stroke="#fff" stroke-width="2"/><path d="M1273.23 1338.68L1239.11 1377.93" stroke="#fff" stroke-width="2"/><path d="M1314.46 1386.03L1270.90 1414.43" stroke="#fff" stroke-width="2"/><path d="M1338.41 1434.60L1289.36 1451.87" stroke="#fff" stroke-width="2"/></svg>
<div class="abs" style="left:1610px;top:1167.0px;width:18px;height:17px;background:#0a7ea0"></div>
<span style="position:absolute;left:1655.80px;top:1167.00px;font-family:'Liberation Sans', Arial, sans-serif;font-size:20px;line-height:20px;font-weight:400;color:#0b0b14;white-space:pre;transform:scaleX(1.0458);transform-origin:0 0;">I attend artificial intelligence conferences.</span>
<span style="position:absolute;left:2440.97px;top:1165.00px;font-family:'Liberation Sans', Arial, sans-serif;font-size:20px;line-height:20px;font-weight:700;color:#0b0b14;white-space:pre;transform:scaleX(1.0367);transform-origin:100% 0;">26%</span>
<div class="abs" style="left:1593px;top:1213.0px;width:906px;height:1px;background:#e6ebf1"></div>
<div class="abs" style="left:1610px;top:1247.0px;width:18px;height:17px;background:#0397bd"></div>
<span style="position:absolute;left:1655.80px;top:1247.00px;font-family:'Liberation Sans', Arial, sans-serif;font-size:20px;line-height:20px;font-weight:400;color:#0b0b14;white-space:pre;transform:scaleX(1.0317);transform-origin:0 0;">I attend cybersecurity conferences.</span>
<span style="position:absolute;left:2440.97px;top:1245.00px;font-family:'Liberation Sans', Arial, sans-serif;font-size:20px;line-height:20px;font-weight:700;color:#0b0b14;white-space:pre;transform:scaleX(1.0367);transform-origin:100% 0;">22%</span>
<div class="abs" style="left:1593px;top:1293.0px;width:906px;height:1px;background:#e6ebf1"></div>
<div class="abs" style="left:1610px;top:1327.0px;width:18px;height:17px;background:#00acd7"></div>
<span style="position:absolute;left:1655.80px;top:1327.00px;font-family:'Liberation Sans', Arial, sans-serif;font-size:20px;line-height:20px;font-weight:400;color:#0b0b14;white-space:pre;transform:scaleX(1.0440);transform-origin:0 0;">I attend virtual reality conferences.</span>
<span style="position:absolute;left:2440.97px;top:1325.00px;font-family:'Liberation Sans', Arial, sans-serif;font-size:20px;line-height:20px;font-weight:700;color:#0b0b14;white-space:pre;transform:scaleX(1.0367);transform-origin:100% 0;">12%</span>
<div class="abs" style="left:1593px;top:1373.0px;width:906px;height:1px;background:#e6ebf1"></div>
<div class="abs" style="left:1610px;top:1407.0px;width:18px;height:17px;background:#7bc8ea"></div>
<span style="position:absolute;left:1655.80px;top:1407.00px;font-family:'Liberation Sans', Arial, sans-serif;font-size:20px;line-height:20px;font-weight:400;color:#0b0b14;white-space:pre;transform:scaleX(1.0451);transform-origin:0 0;">I attend software development conferences.</span>
<span style="position:absolute;left:2440.97px;top:1405.00px;font-family:'Liberation Sans', Arial, sans-serif;font-size:20px;line-height:20px;font-weight:700;color:#0b0b14;white-space:pre;transform:scaleX(1.0367);transform-origin:100% 0;">12%</span>
<div class="abs" style="left:2499px;top:1134px;width:19px;height:320px;background:#f1f1f1"></div>
<div class="abs" style="left:2501px;top:1153px;width:15px;height:266px;background:#c1c1c1"></div>
<svg style="left:2499px;top:1134px" width="19" height="30" viewBox="0 0 19 30"><path d="M5 12.500h9l-4.500-5z" fill="#a3a3a3"/></svg>
</section>
</main>
</div></body></html>
